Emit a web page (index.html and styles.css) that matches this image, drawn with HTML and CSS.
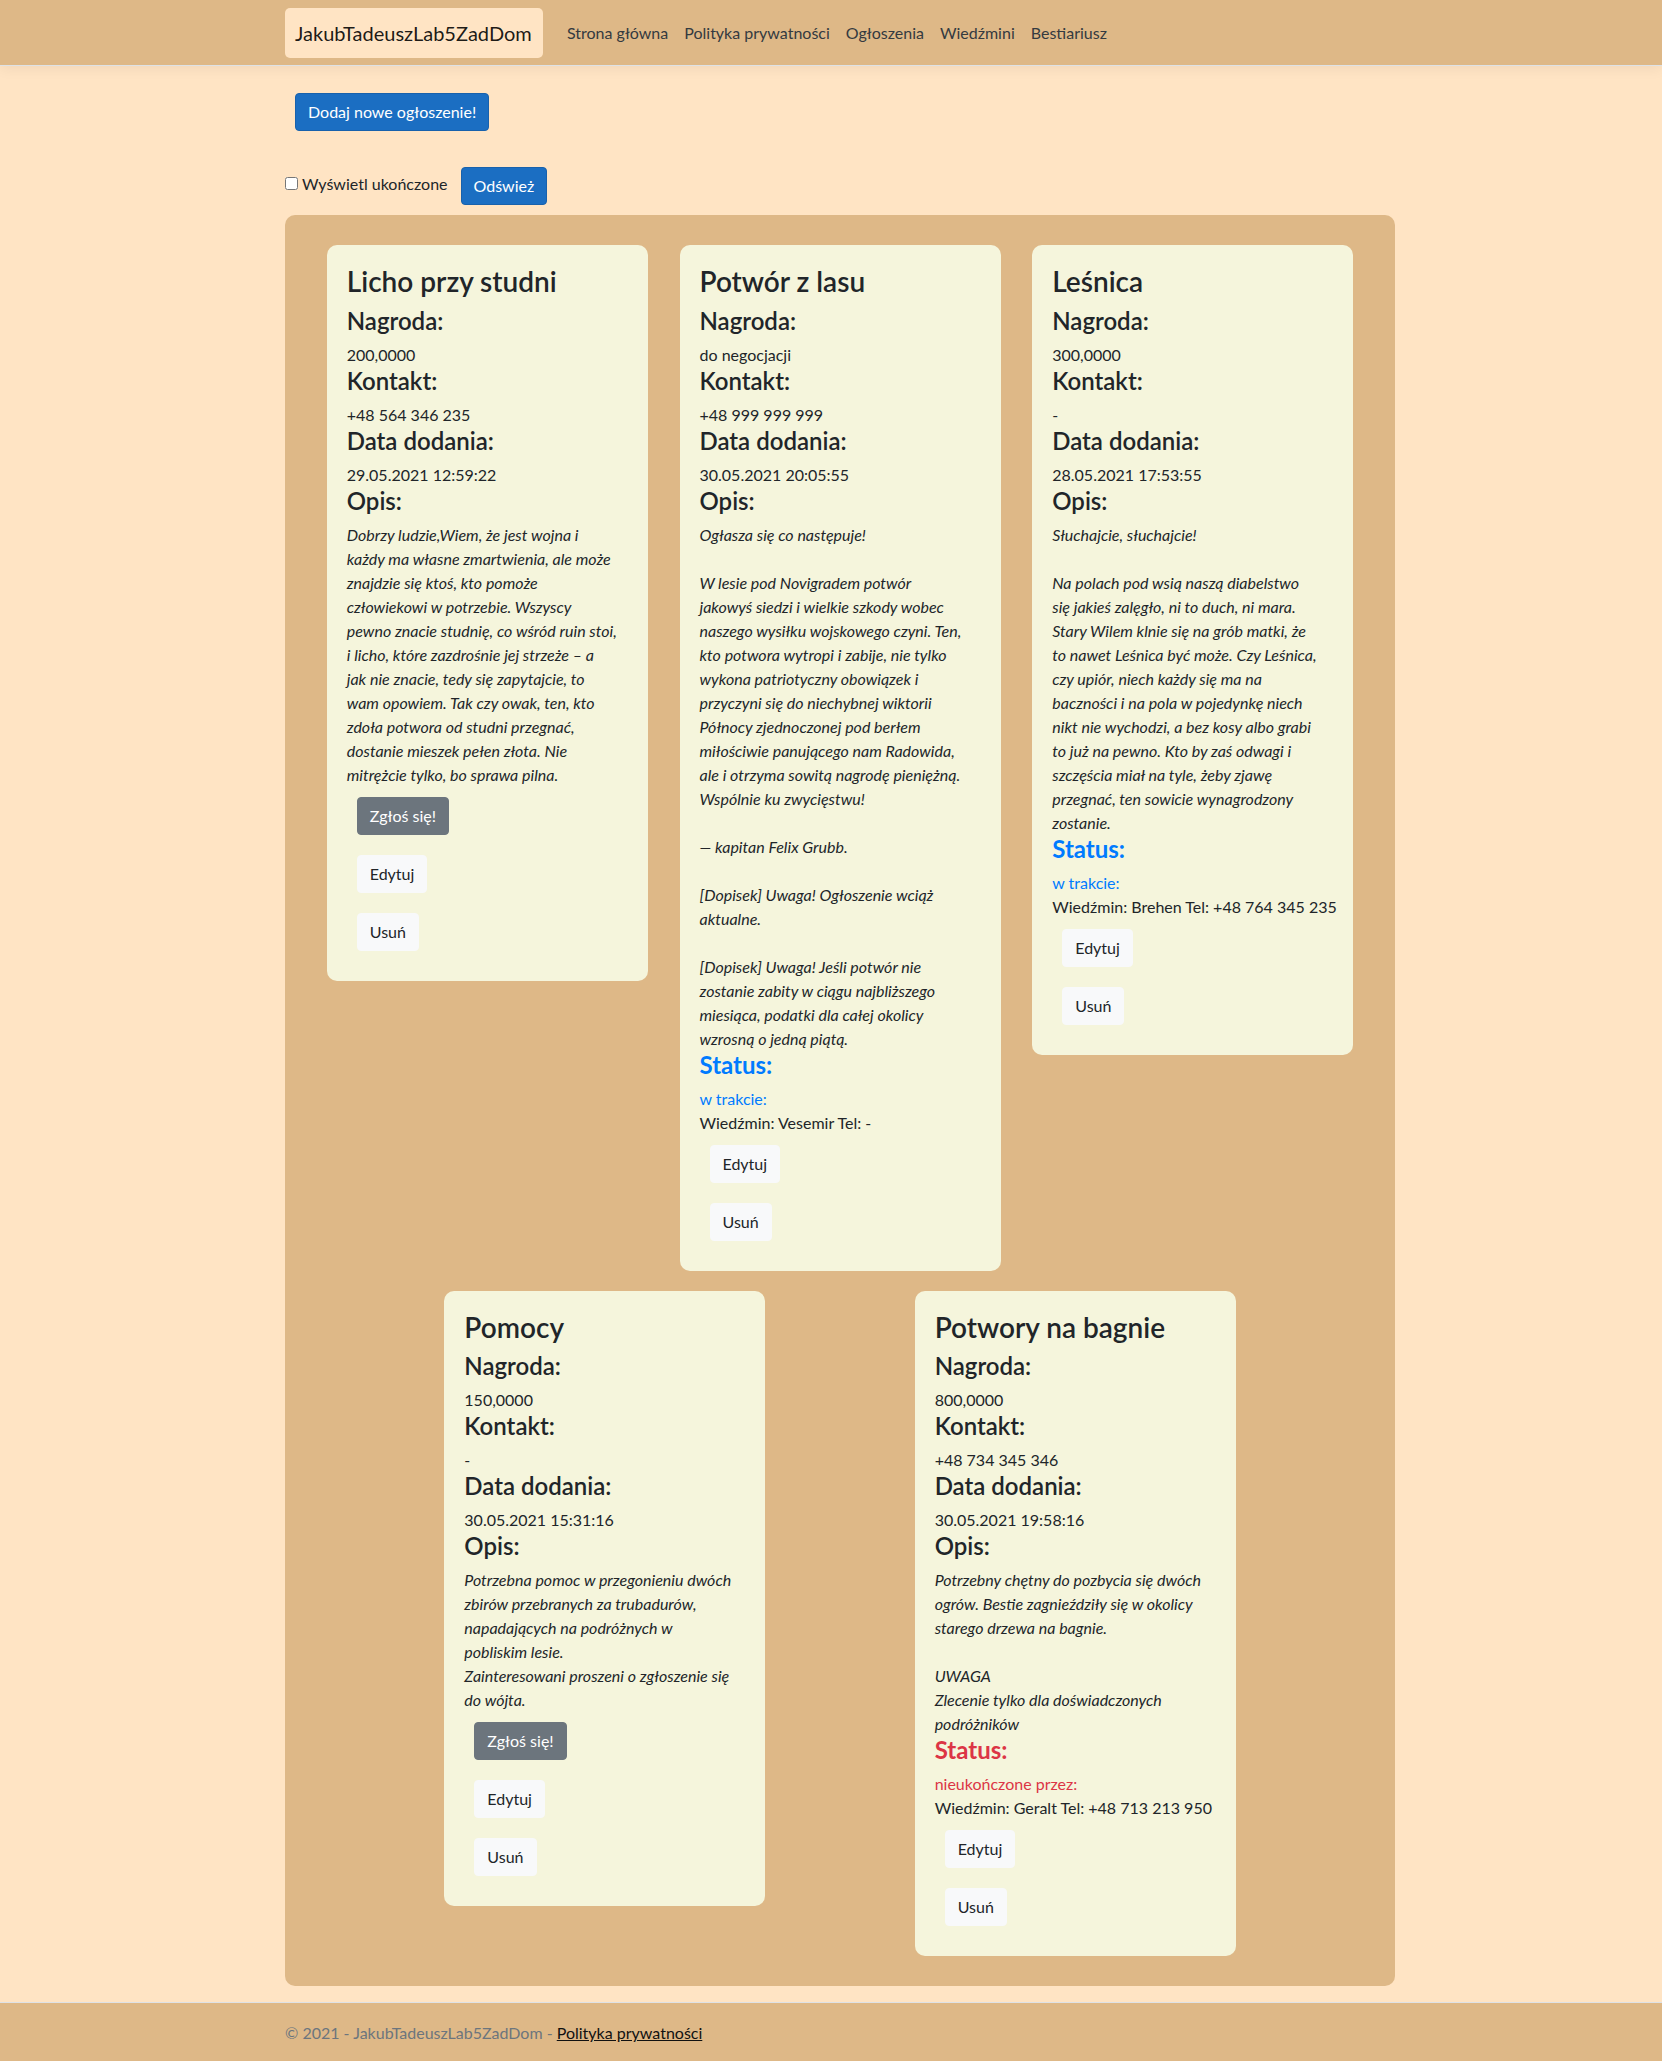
FILE: index.html
```html
<!DOCTYPE html>
<html lang="pl">
<head>
<meta charset="utf-8">
<title>Ogłoszenia - JakubTadeuszLab5ZadDom</title>
<link rel="stylesheet" href="styles.css">
</head>
<body>
<header>
  <nav class="navbar">
    <div class="container nav-inner">
      <a class="brand" href="#">JakubTadeuszLab5ZadDom</a>
      <ul class="nav-links">
        <li><a href="#">Strona główna</a></li>
        <li><a href="#">Polityka prywatności</a></li>
        <li><a href="#">Ogłoszenia</a></li>
        <li><a href="#">Wiedźmini</a></li>
        <li><a href="#">Bestiariusz</a></li>
      </ul>
    </div>
  </nav>
</header>

<div class="container">
  <main class="main">
    <div class="add-row">
      <button class="btn btn-primary">Dodaj nowe ogłoszenie!</button>
    </div>

    <div class="filter-row">
      <label class="check-label"><input type="checkbox" class="check">Wyświetl ukończone</label>
      <button class="btn btn-primary">Odśwież</button>
    </div>

    <div class="board">
      <article class="card">
        <h3 class="card-title">Licho przy studni</h3>
        <h4 class="label">Nagroda:</h4>
        <div class="value">200,0000</div>
        <h4 class="label">Kontakt:</h4>
        <div class="value">+48 564 346 235</div>
        <h4 class="label">Data dodania:</h4>
        <div class="value">29.05.2021 12:59:22</div>
        <h4 class="label">Opis:</h4>
        <p class="desc">Dobrzy ludzie,Wiem, że jest wojna i<br>każdy ma własne zmartwienia, ale może<br>znajdzie się ktoś, kto pomoże<br>człowiekowi w potrzebie. Wszyscy<br>pewno znacie studnię, co wśród ruin stoi,<br>i licho, które zazdrośnie jej strzeże – a<br>jak nie znacie, tedy się zapytajcie, to<br>wam opowiem. Tak czy owak, ten, kto<br>zdoła potwora od studni przegnać,<br>dostanie mieszek pełen złota. Nie<br>mitrężcie tylko, bo sprawa pilna.</p>
        <div class="action"><button class="btn btn-secondary">Zgłoś się!</button></div>
        <div class="action"><button class="btn btn-light">Edytuj</button></div>
        <div class="action"><button class="btn btn-light">Usuń</button></div>
      </article>

      <article class="card">
        <h3 class="card-title">Potwór z lasu</h3>
        <h4 class="label">Nagroda:</h4>
        <div class="value">do negocjacji</div>
        <h4 class="label">Kontakt:</h4>
        <div class="value">+48 999 999 999</div>
        <h4 class="label">Data dodania:</h4>
        <div class="value">30.05.2021 20:05:55</div>
        <h4 class="label">Opis:</h4>
        <p class="desc">Ogłasza się co następuje!<br><br>W lesie pod Novigradem potwór<br>jakowyś siedzi i wielkie szkody wobec<br>naszego wysiłku wojskowego czyni. Ten,<br>kto potwora wytropi i zabije, nie tylko<br>wykona patriotyczny obowiązek i<br>przyczyni się do niechybnej wiktorii<br>Północy zjednoczonej pod berłem<br>miłościwie panującego nam Radowida,<br>ale i otrzyma sowitą nagrodę pieniężną.<br>Wspólnie ku zwycięstwu!<br><br>— kapitan Felix Grubb.<br><br>[Dopisek] Uwaga! Ogłoszenie wciąż<br>aktualne.<br><br>[Dopisek] Uwaga! Jeśli potwór nie<br>zostanie zabity w ciągu najbliższego<br>miesiąca, podatki dla całej okolicy<br>wzrosną o jedną piątą.</p>
        <h4 class="label status status-progress">Status:</h4>
        <div class="value state-progress">w trakcie:</div>
        <div class="value">Wiedźmin: Vesemir Tel: -</div>
        <div class="action"><button class="btn btn-light">Edytuj</button></div>
        <div class="action"><button class="btn btn-light">Usuń</button></div>
      </article>

      <article class="card">
        <h3 class="card-title">Leśnica</h3>
        <h4 class="label">Nagroda:</h4>
        <div class="value">300,0000</div>
        <h4 class="label">Kontakt:</h4>
        <div class="value">-</div>
        <h4 class="label">Data dodania:</h4>
        <div class="value">28.05.2021 17:53:55</div>
        <h4 class="label">Opis:</h4>
        <p class="desc">Słuchajcie, słuchajcie!<br><br>Na polach pod wsią naszą diabelstwo<br>się jakieś zalęgło, ni to duch, ni mara.<br>Stary Wilem klnie się na grób matki, że<br>to nawet Leśnica być może. Czy Leśnica,<br>czy upiór, niech każdy się ma na<br>baczności i na pola w pojedynkę niech<br>nikt nie wychodzi, a bez kosy albo grabi<br>to już na pewno. Kto by zaś odwagi i<br>szczęścia miał na tyle, żeby zjawę<br>przegnać, ten sowicie wynagrodzony<br>zostanie.</p>
        <h4 class="label status status-progress">Status:</h4>
        <div class="value state-progress">w trakcie:</div>
        <div class="value">Wiedźmin: Brehen Tel: +48 764 345 235</div>
        <div class="action"><button class="btn btn-light">Edytuj</button></div>
        <div class="action"><button class="btn btn-light">Usuń</button></div>
      </article>

      <article class="card">
        <h3 class="card-title">Pomocy</h3>
        <h4 class="label">Nagroda:</h4>
        <div class="value">150,0000</div>
        <h4 class="label">Kontakt:</h4>
        <div class="value">-</div>
        <h4 class="label">Data dodania:</h4>
        <div class="value">30.05.2021 15:31:16</div>
        <h4 class="label">Opis:</h4>
        <p class="desc">Potrzebna pomoc w przegonieniu dwóch<br>zbirów przebranych za trubadurów,<br>napadających na podróżnych w<br>pobliskim lesie.<br>Zainteresowani proszeni o zgłoszenie się<br>do wójta.</p>
        <div class="action"><button class="btn btn-secondary">Zgłoś się!</button></div>
        <div class="action"><button class="btn btn-light">Edytuj</button></div>
        <div class="action"><button class="btn btn-light">Usuń</button></div>
      </article>

      <article class="card">
        <h3 class="card-title">Potwory na bagnie</h3>
        <h4 class="label">Nagroda:</h4>
        <div class="value">800,0000</div>
        <h4 class="label">Kontakt:</h4>
        <div class="value">+48 734 345 346</div>
        <h4 class="label">Data dodania:</h4>
        <div class="value">30.05.2021 19:58:16</div>
        <h4 class="label">Opis:</h4>
        <p class="desc">Potrzebny chętny do pozbycia się dwóch<br>ogrów. Bestie zagnieździły się w okolicy<br>starego drzewa na bagnie.<br><br>UWAGA<br>Zlecenie tylko dla doświadczonych<br>podróżników</p>
        <h4 class="label status status-unfinished">Status:</h4>
        <div class="value state-unfinished">nieukończone przez:</div>
        <div class="value">Wiedźmin: Geralt Tel: +48 713 213 950</div>
        <div class="action"><button class="btn btn-light">Edytuj</button></div>
        <div class="action"><button class="btn btn-light">Usuń</button></div>
      </article>
    </div>
  </main>
</div>

<footer class="footer">
  <div class="container">© 2021 - JakubTadeuszLab5ZadDom - <a href="#" class="footer-link">Polityka prywatności</a></div>
</footer>
</body>
</html>
```

FILE: styles.css
```css
* {
  box-sizing: border-box;
}

html, body {
  margin: 0;
  padding: 0;
}

body {
  font-family: Lato, "Liberation Sans", sans-serif;
  font-size: 16px;
  line-height: 24px;
  color: #212529;
  background: #ffe4c4;
}

.container {
  width: 1110px;
  margin-left: calc(50% - 546px);
}

/* ---------- navbar ---------- */
.navbar {
  background: #deb887;
  padding: 8px 0 7px;
  border-bottom: 1px solid #dee2e6;
  box-shadow: 0 4px 12px rgba(0, 0, 0, 0.05);
}

.nav-inner {
  display: flex;
  align-items: center;
}

.brand {
  display: block;
  width: 258px;
  padding: 10px 10px;
  font-size: 20px;
  line-height: 30px;
  color: rgba(0, 0, 0, 0.9);
  background: #ffe4c4;
  border-radius: 5px;
  text-decoration: none;
  margin-right: 16px;
  white-space: nowrap;
}

.nav-links {
  display: flex;
  list-style: none;
  margin: 0;
  padding: 0;
}

.nav-links a {
  display: block;
  padding: 8px 8px;
  color: #343a40;
  text-decoration: none;
  font-size: 16px;
  line-height: 24px;
}

/* ---------- main ---------- */
.main {
  padding-bottom: 16px;
}

.add-row {
  padding-top: 27px;
  padding-left: 10px;
  display: flex;
}

.filter-row {
  margin-top: 36px;
  display: flex;
  align-items: center;
}

.check-label {
  display: flex;
  align-items: center;
  margin-bottom: 5px;
}

.check {
  width: 13px;
  height: 13px;
  margin: 0 4px 0 0;
}

.filter-row .btn {
  margin-left: 13px;
}

/* ---------- buttons ---------- */
.btn {
  display: inline-block;
  font-family: inherit;
  font-size: 16px;
  line-height: 24px;
  padding: 6px 12px;
  border: 1px solid transparent;
  border-radius: 4px;
  cursor: pointer;
}

.btn-primary {
  color: #fff;
  background: #1b6ec2;
  border-color: #1861ac;
}

.btn-secondary {
  color: #fff;
  background: #6c757d;
  border-color: #6c757d;
}

.btn-light {
  color: #212529;
  background: #f8f9fa;
  border-color: #f8f9fa;
}

/* ---------- board & cards ---------- */
.board {
  margin-top: 10px;
  background: #deb887;
  border-radius: 10px;
  padding: 20px;
  display: flex;
  flex-wrap: wrap;
  justify-content: space-evenly;
  align-items: flex-start;
}

.card {
  width: 321px;
  margin: 10px;
  padding: 20px;
  background: #f5f5dc;
  border-radius: 10px;
}

.card-title {
  font-size: 28px;
  line-height: 33.6px;
  font-weight: 600;
  margin: 0 0 8px;
}

.label {
  font-size: 24px;
  line-height: 28px;
  font-weight: 600;
  margin: 0 0 8px;
}

.value {
  font-size: 16px;
  line-height: 24px;
  white-space: nowrap;
}

.desc {
  margin: 0;
  font-style: italic;
  font-size: 16px;
  line-height: 24px;
}

.status {
  font-weight: 700;
}

.status-progress,
.state-progress {
  color: #007bff;
}

.status-unfinished,
.state-unfinished {
  color: #dc3545;
}

.action {
  display: flex;
  padding: 10px;
}

/* ---------- footer ---------- */
.footer {
  background: #deb887;
  border-top: 1px solid #dee2e6;
  line-height: 60px;
  color: #6c757d;
  white-space: nowrap;
}

.footer-link {
  color: #111;
  text-decoration: underline;
}
```
